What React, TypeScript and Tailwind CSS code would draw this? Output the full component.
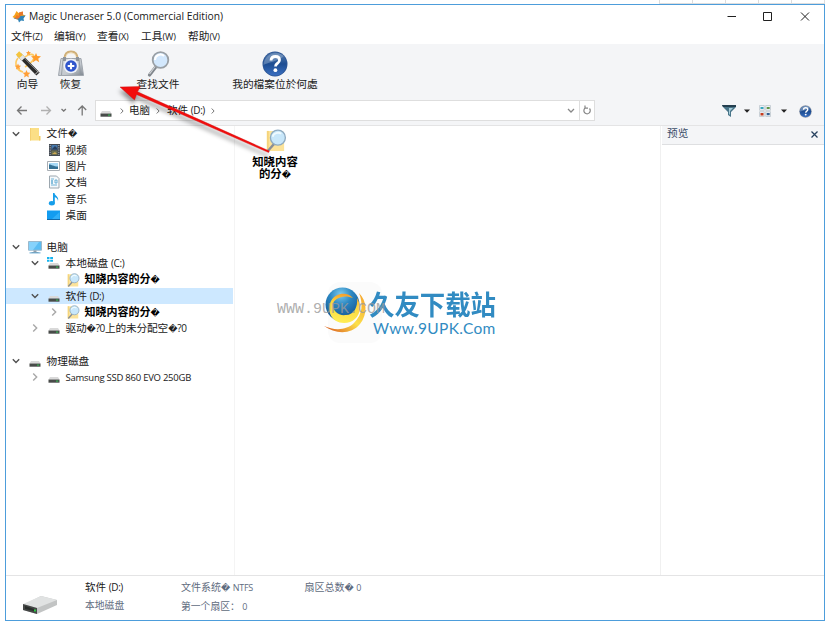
import { ReactNode } from "react"
import clsx from "clsx"

// undecodable bytes in localized names
const Bad = ({ className = "text-[9px]" }: { className?: string }) => (
    <span className={clsx("font-['DejaVu_Sans'] font-normal", className)}>
        {"\uFFFD"}
    </span>
)

const Chevron = ({ open = false }: { open?: boolean }) => (
    <svg
        width="8"
        height="8"
        viewBox="0 0 8 8"
        fill="none"
        stroke={open ? "#505050" : "#a8a8a8"}
        strokeWidth="1.4"
    >
        <path d={open ? "M.8 2.3 4 5.5 7.2 2.3" : "M2.2 .5 5.7 4 2.2 7.5"} />
    </svg>
)

const Drive = ({ win = false }: { win?: boolean }) => (
    <svg width="14" height="14" viewBox="0 0 14 14">
        {win && (
            <path
                fill="#18b4ee"
                d="M0 1h2.5v2H0zM3.2 1H6v2H3.2zM0 3.7h2.5v2H0zM3.2 3.7H6v2H3.2z"
            />
        )}
        <path d="M3 7h8l1.5 2.5h-11z" fill="#d9d9d9" />
        <path d="M1.500 9.500h11v3.200h-11z" fill="#484b49" />
        <path d="M9 10.500h2.200v1.200H9z" fill="#37b353" />
    </svg>
)

const Folder = () => (
    <svg width="14" height="14" viewBox="0 0 14 14">
        <path d="M2 1h9v8l1 1v3.500H2z" fill="#fbdf86" />
        <path d="M11 9h1.500v4.500H11z" fill="#f1cc63" />
        <path d="M2 1h1v12.500H2z" fill="#f4d071" />
    </svg>
)

const FolderSearch = ({ size = 14 }: { size?: number }) => (
    <svg width={size} height={size} viewBox="0 0 24 24">
        <path d="M3 2h17v7l1 2v12H3z" fill="#fce39a" />
        <path d="M3 2h2v21H3z" fill="#f5d47b" />
        <path d="m4 23 7-8" stroke="#8a8f96" strokeWidth="2.4" />
        <circle
            cx="14.5"
            cy="9"
            r="7.8"
            fill="#c8e7fa"
            stroke="#8fabc1"
            strokeWidth="1.4"
        />
        <path d="M9 8c1-4 6-5 9-3" stroke="#eefaff" fill="none" strokeWidth="2" />
    </svg>
)

const Film = () => (
    <svg width="14" height="14" viewBox="0 0 14 14">
        <path d="M2 1h11v12H2z" fill="#444a53" />
        <path d="M4.5 2h6v4.5h-6z" fill="#4679ae" />
        <path d="M4.5 7.5h6V12h-6z" fill="#6c7050" />
        <path d="m5 6 3-3 2 2v1.5H5z" fill="#283e5b" />
        <path d="m5 11 3-2 2 2z" fill="#d0a954" />
        <path
            d="M3.2 2v10M11.8 2v10"
            stroke="#bbc0c5"
            strokeDasharray="1 1.3"
        />
    </svg>
)

const Picture = () => (
    <svg width="14" height="14" viewBox="0 0 14 14">
        <path d="M.5 2.5h12v9H.5z" fill="#fff" stroke="#a7adb3" />
        <path d="M2 4h9v6H2z" fill="#a8d9f6" />
        <path d="M2 5.5c3 0 4 2 9 2V10H2z" fill="#347094" />
    </svg>
)

const Doc = () => (
    <svg width="14" height="14" viewBox="0 0 14 14">
        <path d="M2.5 1h7l2.5 2.5V13H2.5z" fill="#f5f9fc" stroke="#9ca7af" />
        <path
            d="M4 4h3M4 6h2M4 8h2M4 10h6M8 5h2v3H8zM5 5v4"
            stroke="#4ba1cc"
            strokeWidth=".8"
            fill="none"
        />
    </svg>
)

const Note = () => (
    <svg width="14" height="14" viewBox="0 0 14 14" fill="#169eea">
        <ellipse cx="4.8" cy="11.3" rx="3" ry="2.2" />
        <path d="M6 1h1.500c0 3 4.800 3.300 3.500 8C10.600 6.500 9 5.500 7.800 5.300v6H6z" />
    </svg>
)

const Desktop = () => (
    <svg width="14" height="14" viewBox="0 0 14 14">
        <path d="M0 2.5h13v9.5H0z" fill="#139cf0" />
        <path d="m5 11 7.5-7v7z" fill="#31aff8" />
        <path d="M0 11h13v1H0z" fill="#1369a9" />
    </svg>
)

const Pc = () => (
    <svg width="15" height="14" viewBox="0 0 15 14">
        <path d="M.5 1.5h13v8.700H.5z" fill="#5bbdf3" stroke="#9bb8cb" />
        <path d="M1 2h10L5 10H1z" fill="#86d2fb" />
        <path d="M5.500 10.500h3v1.500h2v1h-7v-1h2z" fill="#92a0ab" />
        <path d="M1.500 12.900h11" stroke="#61a7d2" />
    </svg>
)

const Logo = () => (
    <svg width="14" height="14" viewBox="0 0 14 14">
        <path d="m4.500 1 2 2 4-1.500.5 3 2.500 1-3 3-4 1.500-2.500-1L.5 7l2-2z" fill="#f5a11c" />
        <path d="m7 2.500 4-1v3l-4 2z" fill="#e8782c" />
        <path d="m8 6 5.500-.5-2 3L12 11l-3-.5-2 2-1-3-4.500-1L5 7z" fill="#3185b8" />
        <path d="m4.500 5 4 1.500-2 2-3.500.5z" fill="#f47724" />
    </svg>
)

const Wand = () => (
    <svg width="28" height="28" viewBox="0 0 28 28">
        <path
            d="M4 8C0 13 2 20 9 22M11 7c5-4 9-3 9 0s-4 7-9 10"
            stroke="#ffc95e"
            strokeWidth="1.6"
            fill="none"
        />
        <path d="M5 4.500 24 24" stroke="#2b2b2b" strokeWidth="4.600" />
        <path d="m6 3.500 18.500 19" stroke="#8a8a8a" strokeWidth="1" />
        <path d="m3.500 3 5 5" stroke="#f4c43e" strokeWidth="4.800" />
        <path d="m7 6.500 2.500 2.600" stroke="#e4e4e4" strokeWidth="4.600" />
        <path d="m21 24.500 4-4" stroke="#cfcfcf" strokeWidth="1" />
        <path
            d="m22 3 1.300 3 3.700.2-2.800 2.500 1 3.500-3.200-1.900-3.200 1.900.9-3.500L17 6.200l3.700-.2z"
            fill="#ff9c2b"
        />
        <path
            d="m4 13.500.9 2 2.300.2-1.700 1.600.5 2.200-2-1.200-2 1.200.5-2.200L.8 15.700l2.300-.2zM12.500 20l1.100 2.500 2.700.3-2 1.900.6 2.800-2.400-1.400-2.400 1.400.6-2.800-2-1.900 2.700-.3zM14.500.500l.7 1.600 1.800.200-1.300 1.200.3 1.700-1.500-.900-1.500.900.300-1.700L12 2.300l1.800-.200z"
            fill="#ff9f38"
        />
    </svg>
)

const Kit = () => (
    <svg width="28" height="28" viewBox="0 0 28 28">
        <defs>
            <linearGradient id="kit" x2="1" y2="1">
                <stop stopColor="#dde0e4" />
                <stop offset=".6" stopColor="#c3c8ce" />
                <stop offset="1" stopColor="#7d858e" />
            </linearGradient>
        </defs>
        <path d="M7.500 9q0-7.500 6.500-7.500T20.500 9" fill="none" stroke="#d0b079" strokeWidth="2.200" />
        <path d="M8.700 9q0-6 5.300-6t5.300 6" fill="none" stroke="#f2deb4" strokeWidth=".8" />
        <path d="M4 8.500h20l2.500 17h-25z" fill="url(#kit)" stroke="#a0a6ae" strokeLinejoin="round" />
        <path d="M6 9 4.500 25M22 9l1.500 16" stroke="#8c949c" strokeWidth=".8" />
        <path d="M6 7h3v4H6zM19 7h3v4h-3z" fill="#8e949b" />
        <circle cx="14" cy="16" r="7.300" fill="#f0f3f8" />
        <circle cx="14" cy="16" r="5.800" fill="#2f55cc" />
        <path d="M14 12.700v6.600M10.700 16h6.600" stroke="#fff" strokeWidth="2.100" />
    </svg>
)

const Glass = () => (
    <svg width="26" height="28" viewBox="0 0 26 28">
        <path d="m4.500 25 7-9" stroke="#80868c" strokeWidth="3.200" strokeLinecap="round" />
        <path d="m4.500 24 6-8" stroke="#d2d5d8" strokeWidth="1.200" />
        <circle cx="15.500" cy="10" r="7.800" fill="#d3e8fd" stroke="#9aa0a6" strokeWidth="1.800" />
        <path d="M10 10c0-5 6-7 9-4" fill="none" stroke="#fff" strokeWidth="2" />
    </svg>
)

const Help = ({ size, ring = "#2c5594" }: { size: number; ring?: string }) => (
    <svg width={size} height={size} viewBox="0 0 26 26">
        <defs>
            <linearGradient id="help" x2="0" y2="1">
                <stop stopColor="#597fae" />
                <stop offset=".5" stopColor="#1d4d92" />
                <stop offset="1" stopColor="#3a6fc1" />
            </linearGradient>
        </defs>
        <circle cx="13" cy="13" r="12.5" fill={ring} />
        <circle cx="13" cy="13" r="11.5" fill="url(#help)" />
        <path d="M1.500 14C4 12 17 10 22 5 15-1 2 3 1.500 14" fill="#8fa9cb" opacity=".5" />
        <path
            d="M9 9.5q.2-4 4.5-4 4 0 4 3.5 0 2-2 3.3-2 1.2-2 3.2"
            fill="none"
            stroke="#fff"
            strokeWidth="2.8"
        />
        <circle cx="13.4" cy="19.2" r="1.9" fill="#fff" />
    </svg>
)

const Caret = () => (
    <svg width="6" height="4" viewBox="0 0 6 4">
        <path d="M0 .5h6L3 3.8z" fill="#222" />
    </svg>
)

const Crumb = () => (
    <svg width="4" height="6" viewBox="0 0 4 6">
        <path d="m.7.5 2.4 2.5L.7 5.5" fill="none" stroke="#777" />
    </svg>
)

type Row = {
    level: number
    icon?: ReactNode
    label?: ReactNode
    open?: boolean
    bold?: boolean
    selected?: boolean
}

const found = (
    <>
        知晓内容的分
        <Bad />
    </>
)

const rows: Row[] = [
    { level: 0, icon: <Folder />, label: <>文件<Bad /></>, open: true },
    { level: 1, icon: <Film />, label: "视频" },
    { level: 1, icon: <Picture />, label: "图片" },
    { level: 1, icon: <Doc />, label: "文档" },
    { level: 1, icon: <Note />, label: "音乐" },
    { level: 1, icon: <Desktop />, label: "桌面" },
    { level: 0 },
    { level: 0, icon: <Pc />, label: "电脑", open: true },
    { level: 1, icon: <Drive win />, label: <>本地磁盘 <Latin>(C:)</Latin></>, open: true },
    { level: 2, icon: <FolderSearch />, label: found, bold: true },
    { level: 1, icon: <Drive />, label: <>软件 <Latin>(D:)</Latin></>, open: true, selected: true },
    { level: 2, icon: <FolderSearch />, label: found, bold: true, open: false },
    {
        level: 1,
        icon: <Drive />,
        label: (
            <span className="tracking-[-0.15px]">
                驱动<Bad /><Latin>?0</Latin>上的未分配空<Bad /><Latin>?0</Latin>
            </span>
        ),
        open: false,
    },
    { level: 0 },
    { level: 0, icon: <Drive />, label: "物理磁盘", open: true },
    {
        level: 1,
        icon: <Drive />,
        label: <span className="text-[9.5px] tracking-[-0.25px]">Samsung SSD 860 EVO 250GB</span>,
        open: false,
    },
]

const indents = ["pl-1.5", "pl-[25px]", "pl-11"]

function Latin({ children }: { children: ReactNode }) {
    return <span className="text-[10px] tracking-[-0.4px]">{children}</span>
}

function TreeRow({ level, icon, label, open, bold, selected }: Row) {
    return (
        <div
            className={clsx(
                "flex h-[16.23px] items-center whitespace-nowrap",
                indents[level],
                bold && "text-[11px] font-bold text-black",
                selected && "bg-[#cde8ff]"
            )}
        >
            <span className="w-4 shrink-0">
                {open !== undefined && <Chevron open={open} />}
            </span>
            <span className="flex w-[18.5px] shrink-0">{icon}</span>
            <span className="leading-4">{label}</span>
        </div>
    )
}

function Tool({ icon, label, className }: { icon: ReactNode; label: string; className: string }) {
    return (
        <div className={clsx("flex flex-col items-center", className)}>
            <span className="flex h-7 items-center">{icon}</span>
            <span className="text-[10.7px] leading-3 whitespace-nowrap">{label}</span>
        </div>
    )
}

const menus = [
    ["文件", "(Z)"],
    ["编辑", "(Y)"],
    ["查看", "(X)"],
    ["工具", "(W)"],
    ["帮助", "(V)"],
]

function Toolbar() {
    return (
        <div className="flex h-[56px] pt-[6px]">
            <Tool className="w-[43px]" icon={<Wand />} label="向导" />
            <Tool className="w-[43px]" icon={<Kit />} label="恢复" />
            <Tool className="ml-[36px] w-[60px]" icon={<Glass />} label="查找文件" />
            <Tool className="ml-[43px] w-[88px]" icon={<Help size={26} />} label="我的檔案位於何處" />
        </div>
    )
}

function AddressBar() {
    return (
        <div className="flex h-[21px] items-center">
            <svg width="89" height="12" viewBox="0 0 89 12" fill="none" strokeWidth="1.3">
                <path d="M21 5.500H11.500M15.500 1.500l-4 4 4 4" stroke="#777" />
                <path d="M35 5.500h9.500M40.500 1.500l4 4-4 4" stroke="#b0b0b0" />
                <path d="m55.500 4 2.200 2 2.200-2" stroke="#777" />
                <path d="M76.200 10.500V1M72.200 5l4-4 4 4" stroke="#777" />
            </svg>
            <div className="flex h-[21px] w-[500px] items-center border border-[#dedede] bg-white text-[10.5px]">
                <span className="ml-[3px] flex w-[21px]">
                    <Drive />
                </span>
                <Crumb />
                <span className="ml-[5px] w-[27px]">电脑</span>
                <Crumb />
                <span className="ml-[7px] w-[44px] whitespace-nowrap">
                    软件 <Latin>(D:)</Latin>
                </span>
                <Crumb />
                <svg className="ml-auto" width="8" height="8" viewBox="0 0 8 8">
                    <path d="M1 2 4 5 7 2" fill="none" stroke="#888" strokeWidth="1.3" />
                </svg>
                <span className="ml-[4px] flex h-full w-[15px] items-center justify-center border-l border-[#dedede]">
                    <svg width="10" height="11" viewBox="0 0 10 11" fill="none" stroke="#858585" strokeWidth="1.2">
                        <path d="M3.500 2.800A3.200 3.200 0 1 0 7.500 3.500M3 .500v2.700h3" />
                    </svg>
                </span>
            </div>
            <div className="ml-[127px] flex items-center pt-px">
                <svg width="14" height="13" viewBox="0 0 14 13">
                    <path d="M0 0h14v2L9 7v5L6 10V7L1 2z" fill="#487488" />
                    <path d="M0 0h14v2H1z" fill="#243f4f" />
                    <path d="M7 3h4L8 6v4L7 9z" fill="#a8cedb" />
                </svg>
                <span className="ml-[8px] flex w-[15px]">
                    <Caret />
                </span>
                <svg width="12" height="12" viewBox="0 0 12 12">
                    <path
                        d="M.5.5h4.800v4.800H.5zM6.700.5h4.800v4.800H6.700zM.5 6.700h4.800v4.800H.5zM6.700 6.700h4.800v4.800H6.700z"
                        fill="#edf3f8"
                        stroke="#b9c1c8"
                        strokeWidth=".7"
                    />
                    <path d="M1.500 2h3v2h-3z" fill="#35a5bd" />
                    <path d="M7.700 2h3v2h-3z" fill="#619543" />
                    <path d="M1.500 8h3v2.500h-3z" fill="#c63c1e" />
                    <path d="M7.700 8h3v2.200h-3z" fill="#315f91" />
                </svg>
                <span className="ml-[10px] flex w-[18px]">
                    <Caret />
                </span>
                <Help size={13} ring="#9b9fa8" />
            </div>
        </div>
    )
}

function Watermark() {
    return (
        <>
            <div className="absolute top-[282px] left-[328px] h-[61px] w-[54px] rounded-xl bg-[#fbfbfb]" />
            <svg className="absolute top-[287px] left-[323px]" width="46" height="48" viewBox="0 0 46 48">
                <defs>
                    <radialGradient id="globe" cx=".45" cy=".2" r=".8">
                        <stop stopColor="#7ccbee" />
                        <stop offset=".4" stopColor="#2b87c2" />
                        <stop offset="1" stopColor="#124e8c" />
                    </radialGradient>
                    <linearGradient id="ring" x1=".6" x2=".4" y2="1">
                        <stop stopColor="#f59a2b" />
                        <stop offset=".35" stopColor="#fbd53e" />
                        <stop offset="1" stopColor="#ffee55" />
                    </linearGradient>
                    <linearGradient id="tail" x1="1" x2="0" y2="1">
                        <stop stopColor="#f5a02b" />
                        <stop offset=".5" stopColor="#fce04a" />
                        <stop offset="1" stopColor="#d9531c" />
                    </linearGradient>
                </defs>
                <circle cx="19.5" cy="17.500" r="17" fill="url(#globe)" />
                <path
                    d="M30 11C25 5 13 5 8 14c-5 10 1 22 13 22 9 0 15-6 16-14 0-4-1-8-3-11 1 9-3 17-11 17-8 1-13-4-13-10C10 11 21 7 30 11"
                    fill="url(#ring)"
                />
                <path
                    d="M36 6c8 8 9 21 1 31-9 11-25 10-36 2 11 5 23 4 30-3 9-9 9-20 5-30"
                    fill="url(#tail)"
                />
            </svg>
            <div className="absolute top-[286.5px] left-[369px] origin-left scale-x-[0.94] text-[27px] leading-[36px] font-bold whitespace-nowrap text-[#318bc2]">
                久友下载站
            </div>
            <div className="absolute top-[319px] left-[373px] font-['Lato'] text-[15.5px] leading-[19px] tracking-[0.35px] text-[#318bc2]">
                Www.9UPK.Com
            </div>
            <div className="absolute top-[302px] left-[277px] font-['Liberation_Mono'] text-[15px] leading-4 text-[#9a9a9a]/80">
                WWW.9UPK.COM
            </div>
        </>
    )
}

// red pointer from the found folder to the toolbar
function Pointer() {
    return (
        <svg className="absolute top-[80px] left-[112px]" width="170" height="85" viewBox="112 80 170 85">
            <g style={{ filter: "drop-shadow(-1px 4px 2px #0006)" }}>
                <path
                    d="m120 87 20.500-.5-3 5.300L269.300 151l-.7 1.600L136.500 94.500l-2 5.500z"
                    fill="#f20d0d"
                    stroke="#c90c0c"
                    strokeWidth=".4"
                />
            </g>
        </svg>
    )
}

export default function App() {
    return (
        <div className="relative h-[623px] w-[827px] overflow-hidden bg-white pt-1 pl-[5px] font-['Open_Sans','Noto_Sans_CJK_SC',sans-serif] text-[10.7px] text-[#202020]">
            <div className="absolute top-0 left-[659px] flex h-[4px] w-[166px] border-b border-l border-[#ddd]">
                {[0, 1, 2, 3, 4].map((i) => (
                    <span key={i} className="w-[33px] border-r border-[#ddd]" />
                ))}
            </div>
            <div className="flex h-[617px] w-[820px] flex-col border border-[#4d9ddb] bg-white">
                <div className="flex h-[23px] items-center pl-[6px]">
                    <Logo />
                    <span className="ml-[3px] text-[10.3px] tracking-[-0.02px] whitespace-nowrap">
                        Magic Uneraser 5.0 (Commercial Edition)
                    </span>
                    <svg className="mr-[12px] ml-auto" width="86" height="12" viewBox="0 0 86 12" fill="none" stroke="#202020" strokeWidth="1">
                        <path d="M1.500 5.500H10M37.500 1.500h8v8h-8zM75 1.500l8 8M83 1.500l-8 8" />
                    </svg>
                </div>
                <div className="flex h-[16px] items-center pt-px pl-[5px]">
                    {menus.map(([name, key], i) => (
                        <span
                            key={name}
                            className={clsx(
                                "whitespace-nowrap",
                                i === 3 ? "w-[47px]" : i === 2 ? "w-[44px]" : "w-[43px]"
                            )}
                        >
                            {name}
                            <span className="text-[9px] tracking-[-0.1px]">{key}</span>
                        </span>
                    ))}
                </div>
                <div className="h-[82px] shrink-0 border-b border-[#e4e4e5] bg-[#f4f5f7]">
                    <Toolbar />
                    <AddressBar />
                </div>
                <div className="flex h-[449px]">
                    <div className="w-[229px] shrink-0 border-r border-[#f4f4f4] pr-px">
                        <div className="-mt-[0.4px]">
                            {rows.map((row, i) => (
                                <TreeRow key={i} {...row} />
                            ))}
                        </div>
                    </div>
                    <div className="flex-1">
                        <div className="mt-[2.5px] ml-[10px] flex w-[60px] flex-col items-center text-center font-bold text-black">
                            <FolderSearch size={23} />
                            <span className="mt-[4px] text-[11.4px] leading-[12.5px]">
                                知晓内容
                                <br />
                                的分
                                <Bad />
                            </span>
                        </div>
                    </div>
                    <div className="w-[164px] shrink-0 border-l border-[#f0f0f0]">
                        <div className="ml-px flex h-[19px] items-center justify-between border-b border-[#dedfe1] bg-[#f4f5f7] pr-[6px] pl-[5px] text-[#3b4d68]">
                            <span className="-mt-[3px]">预览</span>
                            <svg className="-mt-[2px]" width="7" height="7" viewBox="0 0 7 7">
                                <path d="m.5.5 6 6m0-6-6 6" stroke="#26405e" strokeWidth="1.3" />
                            </svg>
                        </div>
                    </div>
                </div>
                <div className="flex flex-1 border-t border-[#e4e4e5] text-[10px] leading-[17.5px] text-[#5f6c80]">
                    <div className="flex w-[79px] items-end pb-[6px] pl-[17px]">
                        <svg width="34" height="18" viewBox="0 0 34 18">
                            <path d="M0 9 18 0l16 4v5l-20 9L0 14z" fill="#c2c4c4" />
                            <path d="m0 8 18-8 16 4-20 8z" fill="#e0e2e2" />
                            <path d="m0 8 14 4v6L0 14z" fill="#454746" />
                            <path d="m2 10 9 3v2l-9-2z" fill="#292d2b" />
                            <path d="M11 13.5h2v2h-2z" fill="#28c941" />
                        </svg>
                    </div>
                    <div className="w-[96px] pt-[3px]">
                        <div className="text-[10.5px] text-[#202020]">
                            软件 <Latin>(D:)</Latin>
                        </div>
                        <div className="text-[9.8px]">本地磁盘</div>
                    </div>
                    <div className="w-[123.5px] pt-[3px]">
                        <div>
                            文件系统
                            <Bad /> <span className="text-[9px] tracking-[-0.3px]">NTFS</span>
                        </div>
                        <div className="text-[9.8px]">
                            第一个扇区： <span className="text-[9px]">0</span>
                        </div>
                    </div>
                    <div className="pt-[3px]">
                        扇区总数
                        <Bad /> <span className="text-[9px]">0</span>
                    </div>
                </div>
            </div>
            <Watermark />
            <Pointer />
        </div>
    )
}
